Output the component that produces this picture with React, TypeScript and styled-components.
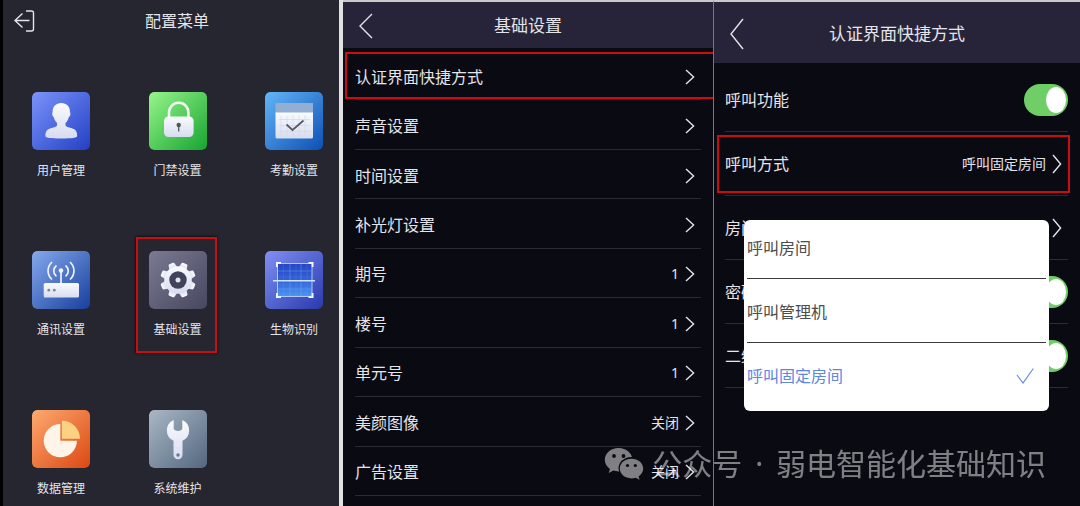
import React from 'react';
import styled, { createGlobalStyle, css } from 'styled-components';

const GlobalStyle = createGlobalStyle`
  *, *::before, *::after { box-sizing: border-box; }
  body {
    margin: 0;
    background: #0a0a13;
    font-family: "Noto Sans", "Noto Sans CJK SC", sans-serif;
  }
  button { font: inherit; color: inherit; background: none; border: 0; padding: 0; cursor: pointer; }
  h1, ul { margin: 0; padding: 0; font: inherit; list-style: none; }
  svg { display: block; }
`;

const red = '#c90d12';

const Board = styled.main`
  position: relative;
  display: grid;
  grid-template-columns: minmax(0, 343fr) minmax(0, 370fr) minmax(0, 367fr);
  min-height: 100vh;
  overflow: hidden;
  color: #e4e4ea;
`;

/* Configuration menu */

const MenuPanel = styled.section`
  background: #262631;
  border-left: 3px solid #000;
  border-right: 4px solid #dfe2e0;
`;

const MenuHeader = styled.header`
  display: flex;
  align-items: center;
  height: 41px;
  padding: 0 21px 0 11px;
`;

const MenuTitle = styled.h1`
  flex: 1;
  text-align: center;
  font-size: 16px;
  line-height: 24px;
`;

const TileGrid = styled.nav`
  display: grid;
  grid-template-columns: repeat(3, 58px);
  row-gap: 70px;
  justify-content: space-between;
  align-items: start;
  padding: 51px 16px 0 29px;
`;

const Tile = styled.button<{ $marked?: boolean }>`
  position: relative;
  display: flex;
  flex-direction: column;
  align-items: center;
  gap: 11px;
  font-size: 12px;
  line-height: 20px;
  white-space: nowrap;
  ${p => p.$marked && css`
    &::after {
      content: '';
      position: absolute;
      inset: -14px -10px -13px -13px;
      border: 2px solid ${red};
      box-shadow: 0 0 3px #000;
    }
  `}
`;

const TileArt = styled.svg`
  width: 58px;
  height: 58px;
  border-radius: 5px;
`;

/* Settings lists */

const ListPanel = styled.section`
  position: relative;
  display: flex;
  flex-direction: column;
  background: #0a0a13;
  border-top: 2px solid #c9cbca;
  & + & { border-left: 1px solid #77777f; }
`;

const ListHeader = styled.header<{ $tall?: boolean }>`
  display: grid;
  grid-template-columns: 1fr auto 1fr;
  align-items: center;
  height: ${p => (p.$tall ? 61 : 46)}px;
  padding: 2px 16px 0;
  background: #272439;
  font-size: 17px;
  line-height: 24px;
`;

const BackButton = styled.button`
  justify-self: start;
`;

const Rows = styled.ul<{ $roomy?: boolean }>`
  display: flex;
  flex-direction: column;
  flex: ${p => (p.$roomy ? 'none' : 1)};
  padding: ${p => (p.$roomy ? '5px 12px 0 11px' : '3px 12px 10px')};
`;

const Row = styled.li<{ $roomy?: boolean; $mark?: 'open' | 'closed' }>`
  position: relative;
  display: flex;
  flex: 1;
  min-height: ${p => (p.$roomy ? 64 : 49)}px;
  padding-top: ${p => (p.$roomy ? 0 : 3)}px;
  border-bottom: 1px solid #2b2b33;
  ${p => p.$mark && css`
    &::after {
      content: '';
      position: absolute;
      inset: ${p.$mark === 'open' ? '1px -12px 0 -10px' : '3px -2px 2px -8px'};
      border: 2px solid ${red};
      border-right-width: ${p.$mark === 'open' ? 0 : 2}px;
      pointer-events: none;
    }
  `}
`;

const rowLine = css`
  display: flex;
  flex: 1;
  align-items: center;
  justify-content: space-between;
  font-size: 16px;
  line-height: 24px;
  text-align: left;
  white-space: nowrap;
`;

const RowButton = styled.button`${rowLine}`;
const RowLabel = styled.label`${rowLine}`;

const RowEnd = styled.span`
  display: flex;
  align-items: center;
  gap: 6px;
  padding-right: 6px;
  font-size: 14px;
`;

const Toggle = styled.input`
  appearance: none;
  display: flex;
  align-items: center;
  justify-content: flex-end;
  width: 44px;
  height: 32px;
  margin: 0;
  padding: 0 2px;
  border-radius: 16px;
  background: #6fcf66;
  &::before {
    content: '';
    width: 20px;
    height: 26px;
    border-radius: 50%;
    background: #fff;
  }
  &:not(:checked) { background: #55555f; justify-content: flex-start; }
`;

const Popup = styled.div`
  position: absolute;
  top: 218px;
  left: 30px;
  right: 31px;
  padding: 0 3px 5px;
  border-radius: 6px;
  background: #fff;
`;

const Option = styled.button`
  display: flex;
  align-items: center;
  justify-content: space-between;
  width: 100%;
  padding: 21px 12px 18px 0;
  color: #4d4d4d;
  font-size: 16px;
  line-height: 24px;
  &:first-child { padding-top: 16px; }
  &:not(:last-child) { border-bottom: 1px solid #3c3c3c; }
  &[aria-selected='true'] { color: #5d86e2; }
`;

const Watermark = styled.div`
  position: absolute;
  right: 34px;
  bottom: 20px;
  display: flex;
  align-items: center;
  gap: 8px;
  color: #fff;
  font-size: 30px;
  line-height: 44px;
  white-space: nowrap;
  opacity: 0.48;
  pointer-events: none;
`;

const Dot = styled.span`
  margin: 0 5px;
`;

const Chevron = ({ tall }: { tall?: boolean }) => (
  <svg width="10" height={tall ? 20 : 16} viewBox={tall ? '0 0 10 20' : '0 0 10 16'} fill="none" stroke="currentColor" strokeWidth="1.4">
    <path d={tall ? 'M1 1 8.6 10 1 19' : 'M1 1 8.6 8 1 15'} />
  </svg>
);

const Back = ({ tall }: { tall?: boolean }) => (
  <BackButton aria-label="返回">
    <svg width="14" height={tall ? 32 : 26} viewBox={tall ? '0 0 14 32' : '0 0 14 26'} fill="none" stroke="currentColor" strokeWidth="1.4">
      <path d={tall ? 'M13 1 1 16l12 15' : 'M13 1 1 13l12 12'} />
    </svg>
  </BackButton>
);

const art: Record<string, { from: string; to: string; shape: React.ReactNode }> = {
  user: {
    from: '#7b93fb', to: '#2340c4',
    shape: (
      <g fill="url(#pale)">
        <path d="M29.3 11c5.500 0 8.700 3.600 8.700 9 .9 1.500.3 4.500-1.200 5.200-.6 2.500-1.800 4.400-3.300 5.800v2.500c1 1.600 4 2 7 3 3.500 1.100 4.700 3.500 4.700 7.500 0 1.800-5 2.500-15.900 2.500s-15.900-.7-15.900-2.500c0-4 1.200-6.400 4.700-7.500 3-1 6-1.400 7-3V31c-1.500-1.400-2.700-3.300-3.300-5.800-1.500-.7-2.100-3.700-1.200-5.200 0-5.400 3.200-9 8.700-9z" />
      </g>
    ),
  },
  lock: {
    from: '#97f58c', to: '#16a52f',
    shape: (
      <>
        <path d="M20 26v-5.500a9.700 9.700 0 0 1 19.400 0V26" fill="none" stroke="#f1fbf0" strokeWidth="2.600" />
        <rect x="15" y="24.500" width="29.600" height="20.500" rx="4.500" fill="url(#pale)" />
        <circle cx="29.700" cy="33" r="2.200" fill="#4d5a50" />
        <path d="M29.700 33v6.500" stroke="#4d5a50" strokeWidth="1.300" />
      </>
    ),
  },
  calendar: {
    from: '#62b6f8', to: '#0e4fb5',
    shape: (
      <>
        <path d="M10.500 11h37.500v11H10.500z" fill="#93aed3" />
        <path d="M10.500 20.500h37.500v24.500a1.500 1.500 0 0 1-1.500 1.500H12a1.500 1.500 0 0 1-1.500-1.500z" fill="url(#pale)" />
        <path d="M16 23.500v20M22 23.500v20M28 23.500v20M34 23.500v20M40 23.500v20M14 27.500h31M14 33.500h31M14 39.500h31" stroke="#cdd6e4" strokeWidth=".6" />
        <path d="m21.500 32.500 6 5.500 11-9.500" fill="none" stroke="#555b66" strokeWidth="1.700" />
      </>
    ),
  },
  router: {
    from: '#86a9ee', to: '#173f9d',
    shape: (
      <>
        <g fill="none" stroke="#eef2fc" strokeLinecap="round" strokeWidth="1.700">
          <path d="M19.500 11.500c-4.600 4.600-4.600 12 0 16.500M24 15c-3 2.700-3 7.300 0 9.800M38.500 11.500c4.600 4.600 4.600 12 0 16.500M34 15c3 2.700 3 7.300 0 9.800" />
          <path d="M29 20v13" />
        </g>
        <circle cx="29" cy="19.500" r="2.300" fill="#eef2fc" />
        <rect x="11.700" y="32" width="35.300" height="14.600" rx="1.500" fill="url(#pale)" />
        <circle cx="16.800" cy="39.200" r="1.400" fill="#7c8596" />
        <circle cx="22.300" cy="39.200" r="1.400" fill="#7c8596" />
      </>
    ),
  },
  gear: {
    from: '#7a7b93', to: '#474860',
    shape: (
      <>
        <g fill="url(#pale)">
          {[22.5, 67.5, 112.5, 157.5, 202.5, 247.5, 292.5, 337.5].map(a => (
            <path key={a} d="M24.800 17 25.800 12.200q.3-1 1.300-1h3.800q1 0 1.300 1L33.200 17z" transform={`rotate(${a} 29 29)`} />
          ))}
          <circle cx="29" cy="29" r="13.800" />
        </g>
        <circle cx="29" cy="29" r="8.700" fill="#41435a" />
        <circle cx="29" cy="29" r="2.500" fill="#dfe3f0" />
      </>
    ),
  },
  scan: {
    from: '#7f8ff3', to: '#2a3aae',
    shape: (
      <>
        <rect x="12.500" y="12.500" width="34.500" height="33" fill="url(#scan-field)" />
        <path d="M25 13v32M36 13v32M13 20h33M13 38h33" stroke="#70a8f3" strokeWidth=".6" opacity=".7" />
        <path d="M18.500 13v32M31 13v32M42 13v32M13 26h33M13 33h33" stroke="#70a8f3" strokeWidth=".4" opacity=".4" />
        <rect x="12.500" y="12.500" width="34.500" height="33" fill="none" stroke="#b8d2fb" strokeWidth=".9" />
        <path d="M11.900 16v-4.100h4.100M43.500 11.900h4.100V16M11.900 42v4.100h4.100M43.500 46.100h4.100V42" fill="none" stroke="#f4f7ff" strokeWidth="1.800" />
        <path d="M8 29.700h42" stroke="#cfe6ff" strokeWidth="1.500" />
      </>
    ),
  },
  pie: {
    from: '#fdaa70', to: '#dd4712',
    shape: (
      <>
        <path d="M28.300 14.100v16.600H44.900A16.600 16.600 0 1 1 28.300 14.100z" fill="#fff4e8" />
        <path d="M30 10.700a18 18 0 0 1 18 18H30z" fill="#fdd183" />
      </>
    ),
  },
  wrench: {
    from: '#aab8c5', to: '#53677f',
    shape: (
      <>
        <path d="M24.700 10v8.500c0 3.200 8.600 3.200 8.600 0V10a11.400 11.400 0 0 1 .2 20.800v14a4.500 4.500 0 0 1-9 0v-14A11.400 11.400 0 0 1 24.700 10z" fill="url(#pale)" />
        <circle cx="29" cy="45" r="1.700" fill="#66788d" />
      </>
    ),
  },
};

const TileIcon = ({ name }: { name: string }) => (
  <TileArt viewBox="0 0 58 58" aria-hidden="true">
    <defs>
      <linearGradient id={`bg-${name}`} x1="0" y1="0" x2="1" y2="1">
        <stop stopColor={art[name].from} />
        <stop offset="1" stopColor={art[name].to} />
      </linearGradient>
      <linearGradient id="pale" x1="0" y1="0" x2="0" y2="1">
        <stop stopColor="#fafbfe" />
        <stop offset="1" stopColor="#d7dcef" />
      </linearGradient>
      <linearGradient id="scan-field" x1="0" y1="0" x2="0" y2="1">
        <stop stopColor="#2746c4" />
        <stop offset=".5" stopColor="#3360d8" />
        <stop offset="1" stopColor="#4c97f0" />
      </linearGradient>
    </defs>
    <rect width="58" height="58" rx="5" fill={`url(#bg-${name})`} />
    {art[name].shape}
  </TileArt>
);

const tiles = [
  ['user', '用户管理'], ['lock', '门禁设置'], ['calendar', '考勤设置'],
  ['router', '通讯设置'], ['gear', '基础设置'], ['scan', '生物识别'],
  ['pie', '数据管理'], ['wrench', '系统维护'],
];

const settings = [
  ['认证界面快捷方式'], ['声音设置'], ['时间设置'], ['补光灯设置'],
  ['期号', '1'], ['楼号', '1'], ['单元号', '1'], ['美颜图像', '关闭'], ['广告设置', '关闭'],
];

const shortcuts: { label: string; value?: string; toggle?: boolean; marked?: boolean }[] = [
  { label: '呼叫功能', toggle: true },
  { label: '呼叫方式', value: '呼叫固定房间', marked: true },
  { label: '房间号' },
  { label: '密码', toggle: true },
  { label: '二维码', toggle: true },
];

const callModes = ['呼叫房间', '呼叫管理机', '呼叫固定房间'];

export default function App() {
  return (
    <>
      <GlobalStyle />
      <Board>
        <MenuPanel>
          <MenuHeader>
            <button aria-label="退出">
              <svg width="22" height="22" viewBox="0 0 22 22" fill="none" stroke="currentColor" strokeWidth="1.4">
                <path d="M12 1h5.500q2 0 2 2v16q0 2-2 2H12M1 10.500h14.500M8.500 3.500 1 10.500l7.500 7" />
              </svg>
            </button>
            <MenuTitle>配置菜单</MenuTitle>
          </MenuHeader>
          <TileGrid>
            {tiles.map(([icon, label]) => (
              <Tile key={icon} $marked={icon === 'gear'}>
                <TileIcon name={icon} />
                <span>{label}</span>
              </Tile>
            ))}
          </TileGrid>
        </MenuPanel>

        <ListPanel>
          <ListHeader>
            <Back />
            <h1>基础设置</h1>
          </ListHeader>
          <Rows>
            {settings.map(([label, value], i) => (
              <Row key={label} $mark={i === 0 ? 'open' : undefined}>
                <RowButton>
                  {label}
                  <RowEnd>{value}<Chevron /></RowEnd>
                </RowButton>
              </Row>
            ))}
          </Rows>
        </ListPanel>

        <ListPanel>
          <ListHeader $tall>
            <Back tall />
            <h1>认证界面快捷方式</h1>
          </ListHeader>
          <Rows $roomy>
            {shortcuts.map(({ label, value, toggle, marked }) => (
              <Row key={label} $roomy $mark={marked ? 'closed' : undefined}>
                {toggle ? (
                  <RowLabel>{label}<Toggle type="checkbox" defaultChecked /></RowLabel>
                ) : (
                  <RowButton>
                    {label}
                    <RowEnd>{value}<Chevron tall /></RowEnd>
                  </RowButton>
                )}
              </Row>
            ))}
          </Rows>
          <Popup role="listbox" aria-label="呼叫方式">
            {callModes.map((mode, i) => (
              <Option key={mode} role="option" aria-selected={i === 2}>
                {mode}
                {i === 2 && (
                  <svg width="18" height="16" viewBox="0 0 18 16" fill="none" stroke="currentColor" strokeWidth="1.1">
                    <path d="m1 7 6 8L17.300.5" />
                  </svg>
                )}
              </Option>
            ))}
          </Popup>
        </ListPanel>

        <Watermark>
          <svg width="40" height="34" viewBox="0 0 40 34" aria-hidden="true">
            <mask id="bubbles">
              <path d="M0 0h40v34H0z" fill="#fff" />
              <ellipse cx="27.500" cy="21.500" rx="13" ry="11.500" fill="#000" />
              <circle cx="10" cy="9" r="1.900" fill="#000" />
              <circle cx="19.500" cy="9" r="1.900" fill="#000" />
            </mask>
            <mask id="eyes">
              <path d="M0 0h40v34H0z" fill="#fff" />
              <circle cx="23.500" cy="18.500" r="1.600" fill="#000" />
              <circle cx="31.300" cy="18.500" r="1.600" fill="#000" />
            </mask>
            <path mask="url(#bubbles)" fill="#fff" d="M14.500 1C6.800 1 .8 6.200.8 12.800c0 3.700 2 7 5.200 9.200l-1.300 4 4.700-2.400c1.600.5 3.300.8 5.100.8 7.700 0 13.900-5 13.900-11.600S22.200 1 14.500 1z" />
            <path mask="url(#eyes)" fill="#fff" d="M27.500 11.800c-6.600 0-11.700 4.300-11.700 9.800s5.100 9.800 11.700 9.800c1.500 0 2.900-.2 4.200-.6l3.900 2-1-3.400c2.800-1.800 4.600-4.600 4.600-7.800 0-5.500-5.100-9.800-11.700-9.800z" />
          </svg>
          <span>公众号 <Dot>·</Dot> 弱电智能化基础知识</span>
        </Watermark>
      </Board>
    </>
  );
}
